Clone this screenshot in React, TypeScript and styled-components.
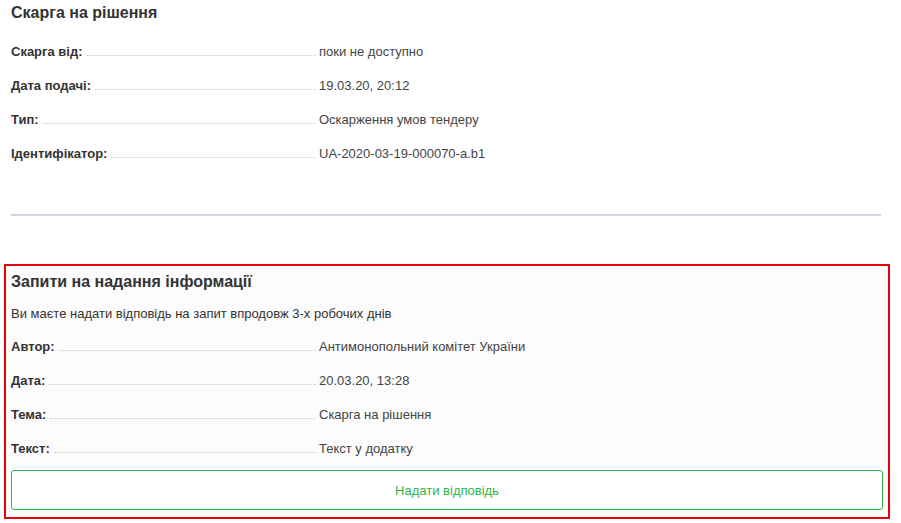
import styled, { createGlobalStyle } from "styled-components";

const GlobalStyle = createGlobalStyle`
  body {
    margin: 0;
    background: #ffffff;
    font-family: "Liberation Sans", Arial, sans-serif;
    color: #333333;
  }
`;

const complaint = [
  { label: "Скарга від:", value: "поки не доступно" },
  { label: "Дата подачі:", value: "19.03.20, 20:12" },
  { label: "Тип:", value: "Оскарження умов тендеру" },
  { label: "Ідентифікатор:", value: "UA-2020-03-19-000070-a.b1" },
];

const request = [
  { label: "Автор:", value: "Антимонопольний комітет України" },
  { label: "Дата:", value: "20.03.20, 13:28" },
  { label: "Тема:", value: "Скарга на рішення" },
  { label: "Текст:", value: "Текст у додатку" },
];

function InfoRows({ items }: { items: { label: string; value: string }[] }) {
  return (
    <>
      {items.map((item) => (
        <Row key={item.label}>
          <LabelCell>
            <Label>{item.label}</Label>
            <Leader />
          </LabelCell>
          <Value>{item.value}</Value>
        </Row>
      ))}
    </>
  );
}

export default function App() {
  return (
    <>
      <GlobalStyle />
      <Page>
        <Section>
          <Title>Скарга на рішення</Title>
          <Rows>
            <InfoRows items={complaint} />
          </Rows>
          <Divider />
        </Section>
        <RequestBox>
          <Title>Запити на надання інформації</Title>
          <Notice>Ви маєте надати відповідь на запит впродовж 3-х робочих днів</Notice>
          <Rows $top={6}>
            <InfoRows items={request} />
          </Rows>
          <AnswerButton type="button">Надати відповідь</AnswerButton>
        </RequestBox>
      </Page>
    </>
  );
}

const Page = styled.div`
  width: 886px;
  padding-left: 4px;
`;

const Section = styled.section`
  padding: 3px 9px 0 7px;
`;

const Title = styled.h2`
  margin: 0;
  font-size: 16px;
  line-height: 20px;
  font-weight: 700;
  color: #333333;
`;

const Rows = styled.div<{ $top?: number }>`
  margin-top: ${(p) => p.$top ?? 12}px;
  display: flex;
  flex-direction: column;
`;

const Row = styled.div`
  display: grid;
  grid-template-columns: 308px 1fr;
  height: 34px;
  align-items: center;
  font-size: 13px;
  line-height: 16px;
`;

const LabelCell = styled.div`
  display: flex;
  align-items: baseline;
`;

const Label = styled.span`
  font-weight: 700;
  color: #333333;
  white-space: nowrap;
`;

const Leader = styled.span`
  flex: 1;
  margin: 0 3px 0 4px;
  border-bottom: 1px dotted #c8c8c8;
`;

const Value = styled.span`
  color: #444444;
`;

const Divider = styled.hr`
  margin: 43px 0 0;
  border: none;
  height: 2px;
  background: #d0d4de;
`;

const RequestBox = styled.section`
  margin-top: 48px;
  border: 2px solid #e8000b;
  background: #fcfcfc;
  padding: 6px 5px 7px;
`;

const Notice = styled.p`
  margin: 12px 0 0;
  font-size: 13px;
  line-height: 20px;
  color: #333333;
`;

const AnswerButton = styled.button`
  display: block;
  width: 100%;
  height: 40px;
  margin-top: 4px;
  background: #ffffff;
  border: 1px solid #2fb54c;
  border-radius: 3px;
  color: #2fb54c;
  font-family: "Liberation Sans", Arial, sans-serif;
  font-size: 13px;
  cursor: pointer;
`;
